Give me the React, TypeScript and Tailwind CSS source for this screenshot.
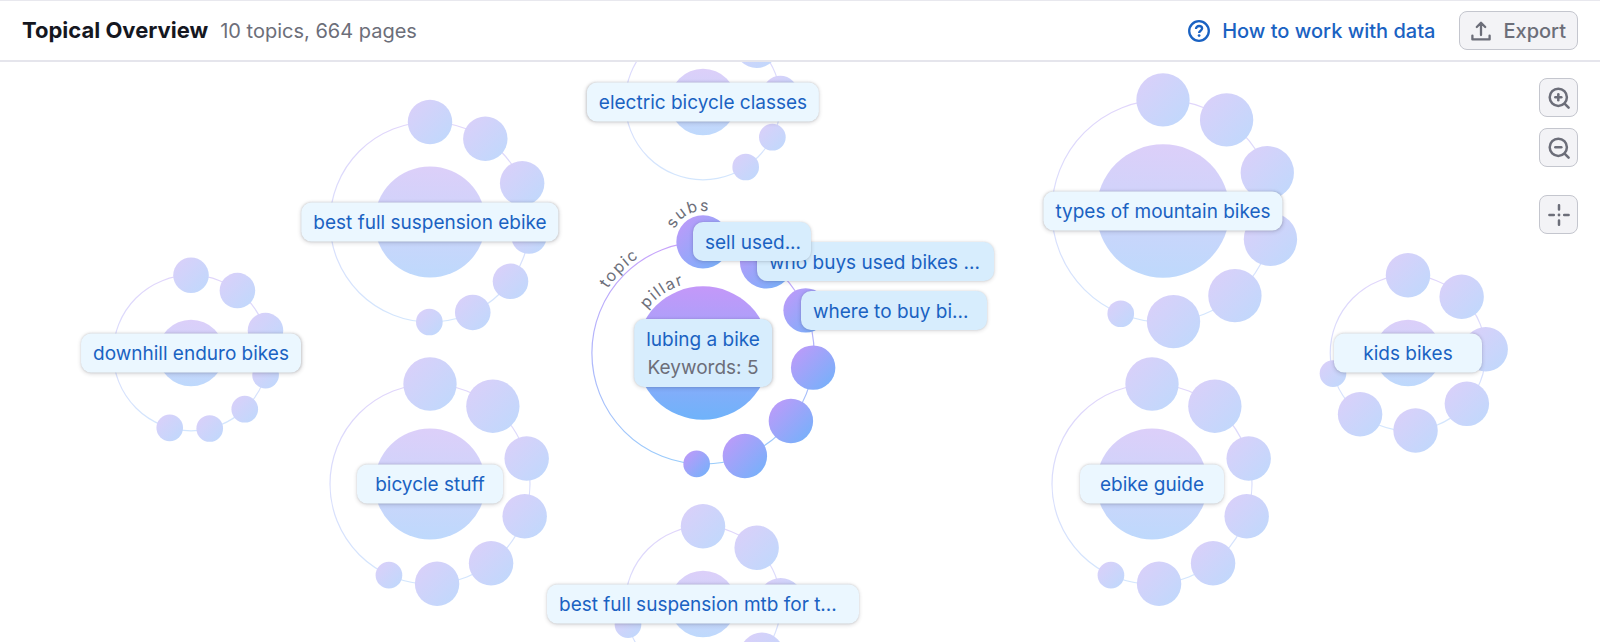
import { Fragment } from "react";
import clsx from "clsx";

type Topic = {
  id: string;
  title: string;
  x: number;
  y: number;
  pillar: number;
  subs: number[];
  active?: boolean;
  labelClass?: string;
};

type Point = { x: number; y: number; r: number };

// map units -> pixels at the current zoom level
const SCALE = 10 / 9;
const RING_GAP = 40 * SCALE;
const SUB_GAP = 12 * SCALE;

const topics: Topic[] = [
  { id: "electric", title: "electric bicycle classes", x: 703, y: 40, pillar: 30, subs: [20, 20, 16, 12, 12] },
  { id: "ebike", title: "best full suspension ebike", x: 430, y: 160, pillar: 50, subs: [20, 20, 20, 16, 16, 16, 12] },
  { id: "downhill", title: "downhill enduro bikes", x: 191, y: 291, pillar: 30, subs: [16, 16, 16, 12, 12, 12, 12] },
  { id: "stuff", title: "bicycle stuff", x: 430, y: 422, pillar: 50, subs: [24, 24, 20, 20, 20, 20, 12], labelClass: "w-[146px]" },
  { id: "mtb", title: "best full suspension mtb for t...", x: 703, y: 542, pillar: 30, subs: [20, 20, 20, 20, 20, 20, 12], labelClass: "w-[312px] text-left" },
  { id: "types", title: "types of mountain bikes", x: 1163, y: 149, pillar: 60, subs: [24, 24, 24, 24, 24, 24, 12] },
  { id: "guide", title: "ebike guide", x: 1152, y: 422, pillar: 50, subs: [24, 24, 20, 20, 20, 20, 12], labelClass: "w-[144px]" },
  { id: "kids", title: "kids bikes", x: 1408, y: 291, pillar: 30, subs: [20, 20, 20, 20, 20, 20, 12], labelClass: "w-[148px]" },
  { id: "lubing", title: "lubing a bike", x: 703, y: 291, pillar: 60, subs: [24, 24, 20, 20, 20, 20, 12], active: true },
];

const subLabels = [
  { title: "who buys used bikes ...", x: 757, y: 200, className: "w-[237px]" },
  { title: "where to buy bi...", x: 801, y: 249, className: "w-[186px]" },
  { title: "sell used...", x: 693, y: 180, className: "w-[118px]" },
];

// subs go clockwise from the top of the ring, with an equal gap between neighbours
function placeSubs(topic: Topic): Point[] {
  const ring = topic.pillar * SCALE + RING_GAP;
  let angle = 0;
  return topic.subs.map((size, i) => {
    const r = size * SCALE;
    if (i > 0) {
      const chord = topic.subs[i - 1] * SCALE + r + SUB_GAP;
      angle += 2 * Math.asin(chord / (2 * ring));
    }
    return {
      x: topic.x + ring * Math.sin(angle),
      y: topic.y - ring * Math.cos(angle),
      r,
    };
  });
}

function arc(cx: number, cy: number, r: number, fromDeg: number, toDeg: number) {
  const a = (fromDeg * Math.PI) / 180;
  const b = (toDeg * Math.PI) / 180;
  return `M ${cx + r * Math.sin(a)} ${cy - r * Math.cos(a)} A ${r} ${r} 0 0 1 ${cx + r * Math.sin(b)} ${cy - r * Math.cos(b)}`;
}

function TopicShape({ topic }: { topic: Topic }) {
  const kind = topic.active ? "active" : "idle";
  const r = topic.pillar * SCALE;
  return (
    <g>
      <circle cx={topic.x} cy={topic.y} r={r + RING_GAP} fill="none" stroke={`url(#${kind}-ring)`} strokeWidth="1.2" />
      <circle cx={topic.x} cy={topic.y} r={r} fill={`url(#${kind}-pillar)`} />
      {placeSubs(topic).map((s, i) => (
        <circle key={i} cx={s.x} cy={s.y} r={s.r} fill={`url(#${kind}-sub)`} />
      ))}
    </g>
  );
}

function Gradients() {
  const kinds = [
    { kind: "active", from: "#c498f9", to: "#6fb3fa", ringFrom: "#c8a2fb", ringTo: "#9accfb" },
    { kind: "idle", from: "#dccff9", to: "#bed9fc", ringFrom: "#e0d5fb", ringTo: "#d3e6fd" },
  ];
  return (
    <defs>
      {kinds.map((k) => (
        <Fragment key={k.kind}>
          <linearGradient id={`${k.kind}-pillar`} x1="0" y1="0" x2="0" y2="1">
            <stop offset="0" stopColor={k.from} />
            <stop offset="1" stopColor={k.to} />
          </linearGradient>
          <linearGradient id={`${k.kind}-ring`} x1="0" y1="0" x2="0" y2="1">
            <stop offset="0" stopColor={k.ringFrom} />
            <stop offset="1" stopColor={k.ringTo} />
          </linearGradient>
          <linearGradient id={`${k.kind}-sub`} x1="0" y1="0" x2="1" y2="1">
            <stop offset="0" stopColor={k.from} />
            <stop offset="1" stopColor={k.to} />
          </linearGradient>
        </Fragment>
      ))}
    </defs>
  );
}

function HelpIcon() {
  return (
    <svg viewBox="0 0 22 22" className="size-[22px]" fill="none" stroke="currentColor" strokeWidth="2.3" aria-hidden="true">
      <circle cx="11" cy="11" r="9.8" />
      <path d="M8 8.9c0-1.8 1.3-2.9 3.1-2.9 1.7 0 3 1 3 2.6 0 2.2-3 2.1-3 4.4" />
      <circle cx="11.1" cy="15.6" r="1.4" fill="currentColor" stroke="none" />
    </svg>
  );
}

function ExportIcon() {
  return (
    <svg viewBox="0 0 20 20" className="size-5" fill="none" stroke="currentColor" strokeWidth="2.3" strokeLinecap="round" strokeLinejoin="round" aria-hidden="true">
      <path d="M1.4 14.6v3.8h17.2v-3.8M10 14V2M5.8 6 10 1.8 14.2 6" />
    </svg>
  );
}

function ZoomIcon({ plus }: { plus?: boolean }) {
  return (
    <svg viewBox="0 0 22 22" className="size-[22px]" fill="none" stroke="currentColor" strokeWidth="2.5" strokeLinecap="round" aria-hidden="true">
      <circle cx="10.3" cy="10.3" r="8.6" />
      <path d="m16.6 16.6 4 4" />
      <path d="M7.3 10.3h6" />
      {plus && <path d="M10.3 7.3v6" />}
    </svg>
  );
}

function CenterIcon() {
  return (
    <svg viewBox="0 0 22 22" className="size-[22px]" fill="none" stroke="currentColor" strokeWidth="2.5" strokeLinecap="round" aria-hidden="true">
      <path d="M1.4 11h4.4M16.2 11h4.4M11 1.2v4.4M11 16.4v4.4" />
      <circle cx="11" cy="11" r="1.4" fill="currentColor" stroke="none" />
    </svg>
  );
}

const controlClass =
  "flex size-[39px] items-center justify-center rounded-lg border border-[#c4c6ce] bg-[#f3f3f6] text-[#6c6e79]";

const labelBase =
  "absolute whitespace-nowrap rounded-[10px] px-3 text-[19px] leading-7 text-[#1a62c2] shadow-[0_0_2px_rgba(25,27,35,0.12),0_1px_4px_rgba(25,27,35,0.16)]";

export default function App() {
  return (
    <div className="flex min-h-screen flex-col bg-white font-['Inter',sans-serif]">
      <header className="flex h-[62px] shrink-0 items-center justify-between border-t border-b-2 border-t-[#e8e8ee] border-b-[#e5e5ec] px-[22px]">
        <div className="flex items-baseline gap-3">
          <h1 className="text-[22px] leading-7 font-bold text-[#15171f]">Topical Overview</h1>
          <p className="text-xl text-[#6c6e79]">10 topics, 664 pages</p>
        </div>
        <div className="flex items-center gap-6">
          <a href="#help" className="flex items-center gap-3 text-xl font-medium text-[#1a62c2]">
            <HelpIcon />
            How to work with data
          </a>
          <button
            type="button"
            className="flex h-[39px] items-center gap-3 rounded-lg border border-[#c4c6ce] bg-[#f3f3f6] px-[11px] text-xl font-medium text-[#6c6e79]"
          >
            <ExportIcon />
            Export
          </button>
        </div>
      </header>

      <main className="relative flex-1 overflow-hidden">
        <svg className="absolute inset-0 size-full" aria-hidden="true">
          <Gradients />
          {topics.map((t) => (
            <TopicShape key={t.id} topic={t} />
          ))}
          <path id="arc-subs" d={arc(703, 180, 31, -66, 60)} fill="none" />
          <path id="arc-topic" d={arc(703, 291, 115, -56, 0)} fill="none" />
          <path id="arc-pillar" d={arc(703, 291, 71, -52, 30)} fill="none" />
          <g className="fill-[#6c6e79] text-base tracking-widest">
            <text>
              <textPath href="#arc-subs">subs</textPath>
            </text>
            <text>
              <textPath href="#arc-topic">topic</textPath>
            </text>
            <text>
              <textPath href="#arc-pillar">pillar</textPath>
            </text>
          </g>
        </svg>

        {topics.map((t) => (
          <button
            key={t.id}
            type="button"
            style={{ left: t.x, top: t.y }}
            className={clsx(
              labelBase,
              "-translate-x-1/2 -translate-y-1/2",
              t.active ? "bg-[#d7edfd] pt-[7px] pb-[5px]" : "h-[39px] bg-[#ebf7ff]",
              t.labelClass
            )}
          >
            {t.title}
            {t.active && <span className="block text-[#6c6e79]">Keywords: 5</span>}
          </button>
        ))}

        {subLabels.map((s) => (
          <button
            key={s.title}
            type="button"
            style={{ left: s.x, top: s.y - 20 }}
            className={clsx(labelBase, "h-[39px] bg-[#d7edfd] pt-0.5 text-left", s.className)}
          >
            {s.title}
          </button>
        ))}

        <div className="absolute top-4 right-[22px] flex flex-col gap-[11px]">
          <button type="button" aria-label="Zoom in" className={controlClass}>
            <ZoomIcon plus />
          </button>
          <button type="button" aria-label="Zoom out" className={controlClass}>
            <ZoomIcon />
          </button>
          <button type="button" aria-label="Center map" className={clsx(controlClass, "mt-[17px]")}>
            <CenterIcon />
          </button>
        </div>
      </main>
    </div>
  );
}
